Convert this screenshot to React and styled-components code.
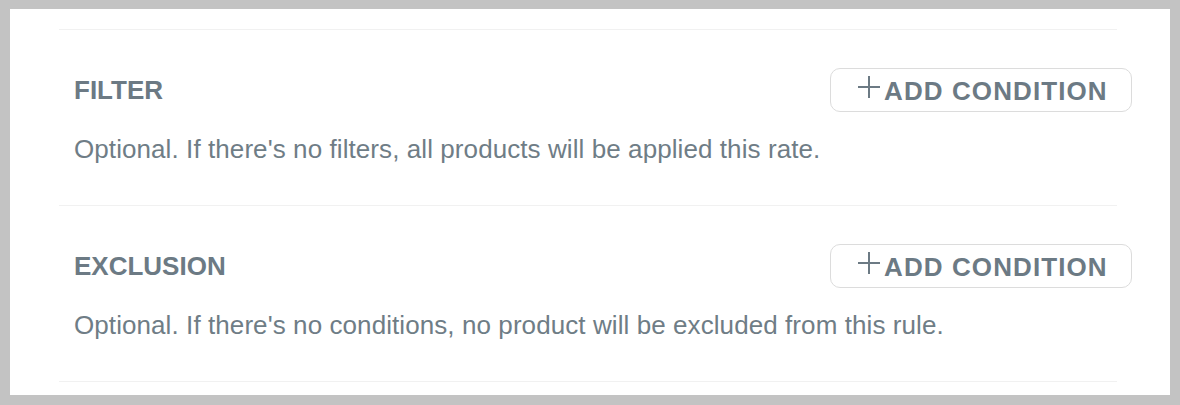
import styled, { createGlobalStyle } from "styled-components"

const GlobalStyle = createGlobalStyle`
    html, body {
        margin: 0;
        padding: 0;
        background: #c3c3c3;
    }
    body {
        font-family: "Liberation Sans", Arial, sans-serif;
    }
`

const Card = styled.div`
    background: #ffffff;
    margin: 9px 10px 10px 10px;
    padding: 20px 53px 13px 49px;
`

const List = styled.div`
    border-bottom: 1px solid #f1f1f1;
`

const Section = styled.section`
    border-top: 1px solid #f1f1f1;
    padding: 38px 0 42px 15px;
`

const Header = styled.div`
    display: flex;
    align-items: center;
    justify-content: space-between;
    height: 44px;
    margin-bottom: 23px;
`

const Title = styled.h3`
    margin: 0;
    font-size: 26px;
    line-height: 28px;
    font-weight: 700;
    color: #6c7a84;
`

const Button = styled.button`
    display: inline-flex;
    align-items: center;
    box-sizing: border-box;
    width: 302px;
    height: 44px;
    margin-right: -15px;
    padding: 0 0 0 27px;
    background: #ffffff;
    border: 1px solid #dcdcdc;
    border-radius: 10px;
    font-family: inherit;
    font-size: 26px;
    font-weight: 700;
    letter-spacing: 1.1px;
    color: #6c7a84;
    cursor: pointer;
`

const Plus = styled.svg`
    width: 22px;
    height: 22px;
    margin: -6px 4px 0 0;
    flex: none;
`

const Label = styled.span`
    line-height: 28px;
    padding-top: 2px;
`

const Note = styled.p`
    margin: 0;
    font-size: 26px;
    line-height: 28px;
    letter-spacing: 0.08px;
    color: #6f7d86;
`

const AddButton = () => (
    <Button type="button">
        <Plus viewBox="0 0 22 22">
            <path d="M11 0v22M0 11h22" stroke="#6c7a84" strokeWidth="2" fill="none" />
        </Plus>
        <Label>ADD CONDITION</Label>
    </Button>
)

const rules = [
    { title: "FILTER", note: "Optional. If there's no filters, all products will be applied this rate." },
    { title: "EXCLUSION", note: "Optional. If there's no conditions, no product will be excluded from this rule." },
]

const App = () => {
    return (
        <>
            <GlobalStyle />
            <Card>
                <List>
                    {rules.map(rule => (
                        <Section key={rule.title}>
                            <Header>
                                <Title>{rule.title}</Title>
                                <AddButton />
                            </Header>
                            <Note>{rule.note}</Note>
                        </Section>
                    ))}
                </List>
            </Card>
        </>
    )
}

export default App
